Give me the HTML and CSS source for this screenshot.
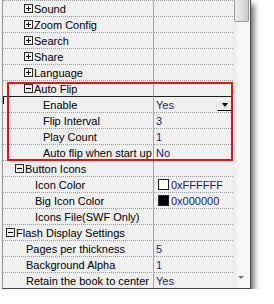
FILE: index.html
```html
<!DOCTYPE html>
<html>
<head>
<meta charset="utf-8">
<link rel="stylesheet" href="styles.css">
</head>
<body>
<div class="panel">
  <div class="grid">
    <div class="row"><div class="name l2"><span class="box plus"></span>Sound</div><div class="val"></div></div>
    <div class="row"><div class="name l2"><span class="box plus"></span>Zoom Config</div><div class="val"></div></div>
    <div class="row"><div class="name l2"><span class="box plus"></span>Search</div><div class="val"></div></div>
    <div class="row"><div class="name l2"><span class="box plus"></span>Share</div><div class="val"></div></div>
    <div class="row"><div class="name l2"><span class="box plus"></span>Language</div><div class="val"></div></div>
    <div class="row sel-before"><div class="name l2"><span class="box"></span>Auto Flip</div><div class="val"></div></div>
    <div class="row sel"><div class="name c2">Enable</div><div class="val">Yes<span class="dd"><span class="tri"></span></span></div></div>
    <div class="row"><div class="name c2">Flip Interval</div><div class="val">3</div></div>
    <div class="row"><div class="name c2">Play Count</div><div class="val">1</div></div>
    <div class="row"><div class="name c2">Auto flip when start up</div><div class="val">No</div></div>
    <div class="row"><div class="name l1"><span class="box"></span>Button Icons</div><div class="val"></div></div>
    <div class="row"><div class="name c1">Icon Color</div><div class="val"><span class="sw white"></span>0xFFFFFF</div></div>
    <div class="row"><div class="name c1">Big Icon Color</div><div class="val"><span class="sw black"></span>0x000000</div></div>
    <div class="row"><div class="name c1">Icons File(SWF Only)</div><div class="val"></div></div>
    <div class="row"><div class="name l0"><span class="box"></span>Flash Display Settings</div><div class="val"></div></div>
    <div class="row"><div class="name c0">Pages per thickness</div><div class="val">5</div></div>
    <div class="row"><div class="name c0">Background Alpha</div><div class="val">1</div></div>
    <div class="row"><div class="name c0">Retain the book to center</div><div class="val">Yes</div></div>
  </div>
  <div class="sb">
    <div class="thumb"></div>
    <div class="track"><span class="down"></span></div>
  </div>
  <div class="hl"></div>
  <div class="caret"></div>
</div>
</body>
</html>
```
FILE: styles.css
```css
*, *::before, *::after {
  box-sizing: border-box;
}
html, body {
  margin: 0;
  background: #fff;
}
body {
  font: 11px "Liberation Sans", Arial, sans-serif;
  color: #000;
}
.panel {
  position: relative;
  margin-left: 2px;
  width: 249px;
  height: 289px;
  border-left: 1px solid #9a9a9a;
  border-right: 1px solid #4a4a4a;
  border-bottom: 1px solid #4a4a4a;
  background: #f0f0f0;
  display: flex;
  overflow: hidden;
  box-shadow: 3px 4px 6px rgba(0,0,0,0.6);
}
.grid {
  width: 230px;
  flex: none;
  border-top: 1px dotted #9c9c9c;
  display: flex;
  flex-direction: column;
}
.row {
  display: flex;
  height: 16px;
  flex: none;
}
.name {
  width: 151px;
  flex: none;
  border-right: 1px solid #a4a4a4;
  border-bottom: 1px dotted #9c9c9c;
  white-space: nowrap;
  overflow: hidden;
  display: flex;
  align-items: center;
}
.val {
  width: 79px;
  flex: none;
  border-bottom: 1px dotted #9c9c9c;
  color: #1a1a86;
  padding-left: 2px;
  display: flex;
  align-items: center;
  white-space: nowrap;
  overflow: hidden;
}
.sel-before .name, .sel-before .val {
  border-bottom: 1px solid #202020;
}
.l0 { padding-left: 3px; }
.l1 { padding-left: 12px; }
.l2 { padding-left: 21px; }
.c0 { padding-left: 23px; }
.c1 { padding-left: 32px; }
.c2 { padding-left: 40px; }
.box {
  position: relative;
  width: 9px;
  height: 9px;
  border: 1px solid #2a2a2a;
  margin-right: 1px;
  flex: none;
}
.box::before {
  content: "";
  position: absolute;
  left: 1px;
  top: 3px;
  width: 5px;
  height: 1px;
  background: #000;
}
.box.plus::after {
  content: "";
  position: absolute;
  left: 3px;
  top: 1px;
  width: 1px;
  height: 5px;
  background: #000;
}
.sw {
  width: 11px;
  height: 11px;
  border: 1px solid #222;
  margin-left: 2px;
  margin-right: 2px;
  flex: none;
}
.sw.white { background: #fff; }
.sw.black { background: #000; }
.dd {
  margin-left: auto;
  margin-right: 1px;
  width: 15px;
  height: 12px;
  border: 1px solid;
  border-color: #fff #000 #000 #fff;
  background: #ececec;
  display: flex;
  align-items: center;
  justify-content: center;
}
.tri {
  width: 0;
  height: 0;
  border-left: 3px solid transparent;
  border-right: 3px solid transparent;
  border-top: 4px solid #000;
}
.sb {
  width: 17px;
  flex: none;
  display: flex;
  flex-direction: column;
  background: #f4f4f4;
}
.thumb {
  height: 22px;
  margin: 0 1px;
  border: 1px solid #9a9a9a;
  border-top: none;
  border-radius: 0 0 2px 2px;
  background: linear-gradient(to right, #ececec, #d9d9d9 70%, #c8c8c8);
}
.track {
  flex: 1;
  position: relative;
  background: linear-gradient(to right, #e8e8e8, #f7f7f7 30%, #f7f7f7);
}
.down {
  position: absolute;
  left: 5px;
  bottom: 9px;
  width: 0;
  height: 0;
  border-left: 3px solid transparent;
  border-right: 3px solid transparent;
  border-top: 3px solid #777;
}
.hl {
  position: absolute;
  left: 4px;
  top: 82px;
  width: 226px;
  height: 79px;
  border: 2px solid #e81010;
}
.caret {
  position: absolute;
  left: 0;
  top: 97px;
  width: 1px;
  height: 7px;
  background: #000;
}
```
